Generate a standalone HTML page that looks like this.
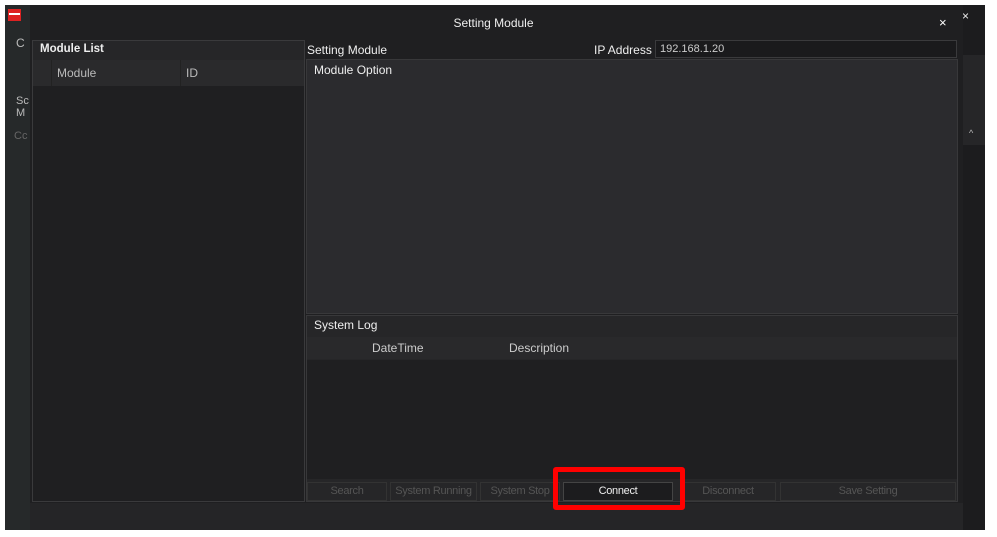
<!DOCTYPE html>
<html><head><meta charset="utf-8"><style>
*{margin:0;padding:0;box-sizing:border-box}
body{width:997px;height:537px;background:#fff;position:relative;overflow:hidden;font-family:"Liberation Sans",sans-serif;font-size:12px;color:#ddd}
.a{position:absolute;white-space:nowrap}
.b{font-size:11px;letter-spacing:-0.3px}
</style></head><body>
<div class="a" style="left:5px;top:5px;width:980px;height:525px;background:#222224"></div>
<div class="a" style="left:5px;top:5px;width:25px;height:525px;background:#26292a"></div>
<div class="a" style="left:8px;top:9px;width:13px;height:12px;background:#d22;"></div>
<div class="a" style="left:9px;top:13px;width:11px;height:2px;background:#fff"></div>
<div class="a" style="left:16px;top:36px;color:#bbb;font-size:12px">C</div>
<div class="a" style="left:16px;top:95px;color:#bbb;font-size:11px;line-height:12px">Sc<br>M</div>
<div class="a" style="left:14px;top:130px;color:#666;font-size:11px">Cc</div>
<div class="a" style="left:963px;top:5px;width:22px;height:525px;background:#1c1c1e"></div>
<div class="a" style="left:963px;top:55px;width:22px;height:90px;background:#262628"></div>
<div class="a" style="left:962px;top:9px;color:#eee;font-size:12px">×</div>
<div class="a" style="left:969px;top:128px;color:#bbb;font-size:9px">^</div>
<div class="a" style="left:30px;top:5px;width:933px;height:498px;background:#1f1f21"></div>
<div class="a" style="left:30px;top:503px;width:933px;height:27px;background:#252527"></div>
<div class="a" style="left:0;top:16px;width:987px;text-align:center;color:#eee;font-size:12px">Setting Module</div>
<div class="a" style="left:939px;top:15px;color:#fff;font-size:13px">×</div>
<div class="a" style="left:32px;top:40px;width:273px;height:462px;background:#1f1f21;border:1px solid #3a3a3c"></div>
<div class="a" style="left:33px;top:41px;width:271px;height:19px;background:#262628"></div>
<div class="a" style="left:40px;top:43px;color:#eee;font-weight:bold;font-size:11.5px">Module List</div>
<div class="a" style="left:33px;top:60px;width:271px;height:26px;background:#2a2a2c"></div>
<div class="a" style="left:51px;top:60px;width:1px;height:26px;background:#222"></div>
<div class="a" style="left:180px;top:60px;width:1px;height:26px;background:#222"></div>
<div class="a" style="left:57px;top:66px;color:#bbb">Module</div>
<div class="a" style="left:186px;top:66px;color:#bbb">ID</div>
<div class="a" style="left:307px;top:43px;color:#eee;font-size:12px">Setting Module</div>
<div class="a" style="left:594px;top:43px;color:#eee;font-size:12px">IP Address</div>
<div class="a" style="left:655px;top:40px;width:302px;height:18px;background:#1a1a1c;border:1px solid #3a3a3c"></div>
<div class="a" style="left:660px;top:43px;color:#ccc;font-size:11px">192.168.1.20</div>
<div class="a" style="left:306px;top:59px;width:652px;height:255px;background:#2b2b2e;border:1px solid #38383a"></div>
<div class="a" style="left:314px;top:63px;color:#eee;font-size:12px">Module Option</div>
<div class="a" style="left:306px;top:315px;width:652px;height:187px;background:#262628;border:1px solid #38383a"></div>
<div class="a" style="left:314px;top:318px;color:#eee;font-size:12px">System Log</div>
<div class="a" style="left:307px;top:337px;width:650px;height:22px;background:#29292b"></div>
<div class="a" style="left:372px;top:341px;color:#ccc">DateTime</div>
<div class="a" style="left:509px;top:341px;color:#ccc">Description</div>
<div class="a" style="left:307px;top:360px;width:650px;height:119px;background:#1f1f21"></div>
<div class="a b" style="left:307px;top:482px;width:80px;height:19px;border:1px solid #333;color:#555;text-align:center;line-height:17px">Search</div>
<div class="a b" style="left:390px;top:482px;width:87px;height:19px;border:1px solid #333;color:#555;text-align:center;line-height:17px">System Running</div>
<div class="a b" style="left:480px;top:482px;width:80px;height:19px;border:1px solid #333;color:#555;text-align:center;line-height:17px">System Stop</div>
<div class="a b" style="left:563px;top:482px;width:110px;height:19px;border:1px solid #444;background:#1c1c1e;color:#eee;text-align:center;line-height:17px">Connect</div>
<div class="a b" style="left:680px;top:482px;width:96px;height:19px;border:1px solid #333;color:#555;text-align:center;line-height:17px">Disconnect</div>
<div class="a b" style="left:780px;top:482px;width:176px;height:19px;border:1px solid #333;color:#555;text-align:center;line-height:17px">Save Setting</div>
<div class="a" style="left:553px;top:467px;width:132px;height:43px;border:5px solid #f00;border-radius:3px"></div>
</body></html>
